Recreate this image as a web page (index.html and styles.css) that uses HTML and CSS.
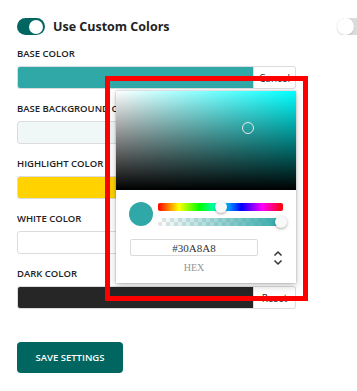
FILE: index.html
```html
<!DOCTYPE html>
<html>
<head lang="en">
    <meta charset="UTF-8">
    <title>Colors</title>
    <link rel="stylesheet" href="styles.css">
</head>
<body>
    <div class="page">
        <div class="head">
            <span class="toggle on"><i></i></span>
            <span class="head-title">Use Custom Colors</span>
            <span class="toggle off"><i></i></span>
        </div>

        <div class="group">
            <div class="label">Base Color</div>
            <div class="row">
                <span class="swatch" style="background:#30a8a8"></span>
                <button class="btn-small">Cancel</button>

                <div class="picker">
                    <div class="sat">
                        <span class="sat-dot"></span>
                    </div>
                    <div class="picker-body">
                        <div class="picker-top">
                            <span class="preview"></span>
                            <div class="sliders">
                                <div class="hue"><span class="knob" style="left:50%"></span></div>
                                <div class="alpha"><span class="knob" style="left:100%"></span></div>
                            </div>
                        </div>
                        <div class="picker-fields">
                            <div class="field">
                                <input class="hex" type="text" value="#30A8A8">
                                <div class="hex-label">HEX</div>
                            </div>
                            <svg class="arrows" width="10" height="16" viewBox="0 0 10 16">
                                <path d="M1.5 5.5 L5 2 L8.5 5.5" fill="none" stroke="#333" stroke-width="1.5"/>
                                <path d="M1.5 10.5 L5 14 L8.5 10.5" fill="none" stroke="#333" stroke-width="1.5"/>
                            </svg>
                        </div>
                    </div>
                </div>

                <div class="mark"></div>
            </div>
        </div>

        <div class="group">
            <div class="label">Base Background Color</div>
            <div class="row">
                <span class="swatch" style="background:#f0f7f7"></span>
            </div>
        </div>

        <div class="group">
            <div class="label">Highlight Color</div>
            <div class="row">
                <span class="swatch" style="background:#ffd200"></span>
            </div>
        </div>

        <div class="group">
            <div class="label">White Color</div>
            <div class="row">
                <span class="swatch" style="background:#ffffff"></span>
            </div>
        </div>

        <div class="group">
            <div class="label">Dark Color</div>
            <div class="row">
                <span class="swatch" style="background:#262626"></span>
                <button class="btn-small">Reset</button>
            </div>
        </div>

        <button class="save">Save Settings</button>
    </div>
</body>
</html>
```

FILE: styles.css
```css
* {
    margin: 0;
    padding: 0;
    box-sizing: border-box;
}
html, body {
    background: #fff;
    overflow: hidden;
}
body {
    font-family: "Open Sans", "Noto Sans", sans-serif;
    color: #222;
}
.page {
    padding: 18px 0 0 17px;
}
.head {
    display: flex;
    align-items: center;
    height: 17px;
    overflow: hidden;
}
.toggle {
    display: flex;
    align-items: center;
    flex: none;
    width: 28px;
    height: 17px;
    border-radius: 9px;
    padding: 2px;
}
.toggle i {
    display: block;
    width: 14px;
    height: 14px;
    border-radius: 50%;
    background: #fff;
}
.toggle.on {
    background: #00665f;
    justify-content: flex-end;
}
.toggle.off {
    background: #dcdcdc;
    margin-left: auto;
    margin-right: -8px;
    padding: 0;
}
.toggle.off i {
    width: 17px;
    height: 17px;
    box-shadow: 0 1px 2px rgba(0,0,0,.15);
}
.head-title {
    margin-left: 8px;
    font-size: 12.5px;
    font-weight: 700;
}
.group {
    margin-top: 12px;
    width: 279px;
}
.group + .group {
    margin-top: 13px;
}
.label {
    font-size: 9.5px;
    font-weight: 600;
    line-height: 14px;
    text-transform: uppercase;
    margin-bottom: 5px;
    white-space: nowrap;
}
.row {
    position: relative;
    display: flex;
    height: 23px;
}
.swatch {
    flex: 1;
    border: 1px solid #dcdcdc;
    border-radius: 3px;
}
.swatch:has(+ .btn-small) {
    border-radius: 3px 0 0 3px;
}
.btn-small {
    width: 47px;
    border: 1px solid #dcdcdc;
    border-left: 0;
    border-radius: 0 3px 3px 0;
    background: #fff;
    font-family: "Open Sans", sans-serif;
    font-size: 10px;
    color: #333;
}
.row:last-child .btn-small {
    width: 42px;
}
.save {
    margin-top: 33px;
    width: 106px;
    height: 31px;
    border: 0;
    border-radius: 4px;
    background: #00665f;
    color: #fff;
    font-family: "Open Sans", sans-serif;
    font-size: 9.5px;
    font-weight: 600;
    text-transform: uppercase;
}

/* color picker popup */
.picker {
    position: absolute;
    top: 25px;
    left: 99px;
    width: 180px;
    height: 192px;
    background: #fff;
    box-shadow: 0 0 2px rgba(0,0,0,.3), 0 3px 8px rgba(0,0,0,.2);
    z-index: 2;
}
.sat {
    position: relative;
    height: 99px;
    background:
        linear-gradient(to top, #000, rgba(0,0,0,0)),
        linear-gradient(to right, #fff, rgba(255,255,255,0)),
        hsl(180, 100%, 50%);
}
.sat-dot {
    position: absolute;
    left: 126px;
    top: 31px;
    width: 12px;
    height: 12px;
    border: 1.5px solid #e8e8e8;
    border-radius: 50%;
}
.picker-body {
    padding: 12px 13px 0 13px;
}
.picker-top {
    display: flex;
    align-items: center;
}
.preview {
    width: 24px;
    height: 24px;
    border-radius: 50%;
    background: #30a8a8;
}
.sliders {
    flex: 1;
    margin-left: 5px;
    display: flex;
    flex-direction: column;
    gap: 7px;
}
.hue, .alpha {
    position: relative;
    height: 8px;
    border-radius: 2px;
}
.hue {
    background: linear-gradient(to right, #f00, #ff0, #0f0, #0ff, #00f, #f0f, #f00);
}
.alpha {
    background:
        linear-gradient(to right, rgba(48,168,168,0), #30a8a8),
        repeating-conic-gradient(#e6e6e6 0 25%, #fff 0 50%) 0 0 / 8px 8px;
}
.knob {
    position: absolute;
    top: -2px;
    width: 12px;
    height: 12px;
    margin-left: -6px;
    border-radius: 50%;
    background: #f8f8f8;
    box-shadow: 0 1px 3px rgba(0,0,0,.35);
}
.alpha .knob {
    margin-left: -8px;
}
.picker-fields {
    display: flex;
    align-items: flex-start;
    margin-top: 13px;
    padding-left: 1px;
}
.field {
    width: 128px;
}
.hex {
    display: block;
    width: 128px;
    height: 17px;
    border: 1px solid #dadada;
    border-radius: 2px;
    text-align: center;
    font-family: "Liberation Serif", serif;
    font-size: 11px;
    color: #333;
    outline: none;
}
.hex-label {
    margin-top: 6px;
    text-align: center;
    font-family: "Liberation Serif", serif;
    font-size: 10px;
    color: #969696;
}
.arrows {
    margin-left: 15px;
    margin-top: 11px;
}

/* annotation frame */
.mark {
    position: absolute;
    left: 88px;
    top: 10px;
    width: 203px;
    height: 225px;
    border: 5px solid #ff0000;
    z-index: 3;
}
```
